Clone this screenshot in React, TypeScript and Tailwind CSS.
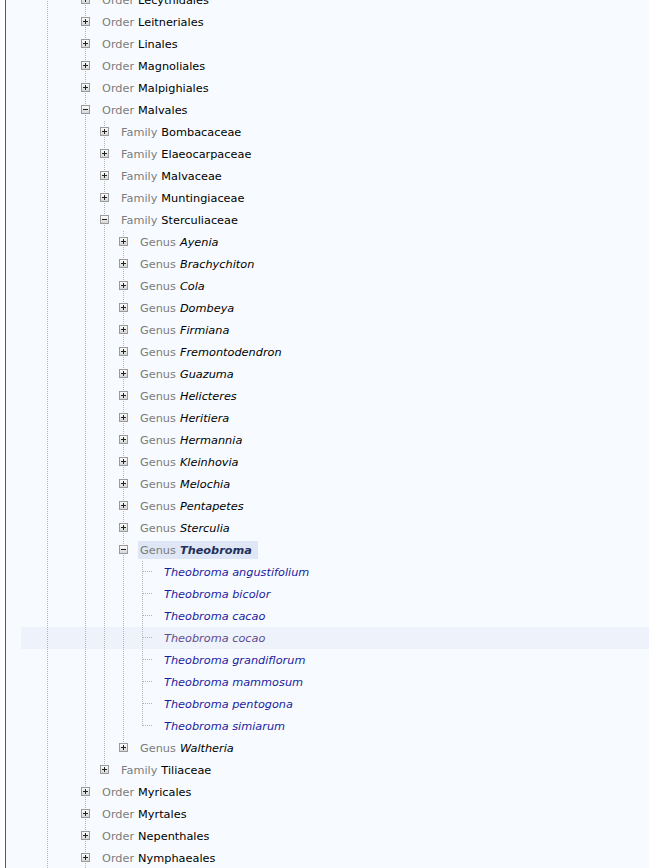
import React from 'react';

type Kind = 'plus' | 'minus' | 'leaf';

type Row = {
  guides: boolean[];
  kind: Kind;
  last?: boolean;
  rank?: string;
  name: string;
  italic?: boolean;
  tone?: 'link' | 'visited' | 'selected';
};

const DOT = '#b4b4b4';

const Guide = ({ on }: { on: boolean }) => (
  <svg width="19" height="22" className="shrink-0 block">
    {on && <line x1="9.5" y1="0" x2="9.5" y2="22" stroke={DOT} strokeDasharray="1 1" />}
  </svg>
);

const NodeCell = ({ kind, last }: { kind: Kind; last?: boolean }) => (
  <svg width="19" height="22" className="shrink-0 block">
    <defs>
      <linearGradient id="boxfill" x1="0" y1="0" x2="0" y2="1">
        <stop offset="0" stopColor="#ffffff" />
        <stop offset="1" stopColor="#d4d4d4" />
      </linearGradient>
    </defs>
    <line x1="9.5" y1="0" x2="9.5" y2={last ? 11 : 22} stroke={DOT} strokeDasharray="1 1" />
    {kind === 'leaf' ? (
      <line x1="10" y1="10.5" x2="19" y2="10.5" stroke={DOT} strokeDasharray="1 1" />
    ) : (
      <>
        <rect x="5.5" y="6.5" width="8" height="8" fill="url(#boxfill)" stroke="#9a9a9a" />
        <line x1="7" y1="10.5" x2="12" y2="10.5" stroke="#222" />
        {kind === 'plus' && <line x1="9.5" y1="8" x2="9.5" y2="13" stroke="#222" />}
      </>
    )}
  </svg>
);

const O = [true, false];
const F = [true, false, true];
const G = [true, false, true, true];
const S = [true, false, true, true, true];

const rows: Row[] = [
  { guides: O, kind: 'plus', rank: 'Order', name: 'Lecythidales' },
  { guides: O, kind: 'plus', rank: 'Order', name: 'Leitneriales' },
  { guides: O, kind: 'plus', rank: 'Order', name: 'Linales' },
  { guides: O, kind: 'plus', rank: 'Order', name: 'Magnoliales' },
  { guides: O, kind: 'plus', rank: 'Order', name: 'Malpighiales' },
  { guides: O, kind: 'minus', rank: 'Order', name: 'Malvales' },
  { guides: F, kind: 'plus', rank: 'Family', name: 'Bombacaceae' },
  { guides: F, kind: 'plus', rank: 'Family', name: 'Elaeocarpaceae' },
  { guides: F, kind: 'plus', rank: 'Family', name: 'Malvaceae' },
  { guides: F, kind: 'plus', rank: 'Family', name: 'Muntingiaceae' },
  { guides: F, kind: 'minus', rank: 'Family', name: 'Sterculiaceae' },
  ...['Ayenia', 'Brachychiton', 'Cola', 'Dombeya', 'Firmiana', 'Fremontodendron', 'Guazuma', 'Helicteres', 'Heritiera', 'Hermannia', 'Kleinhovia', 'Melochia', 'Pentapetes', 'Sterculia'].map(
    (n): Row => ({ guides: G, kind: 'plus', rank: 'Genus', name: n, italic: true })
  ),
  { guides: G, kind: 'minus', rank: 'Genus', name: 'Theobroma', italic: true, tone: 'selected' },
  { guides: S, kind: 'leaf', name: 'Theobroma angustifolium', tone: 'link' },
  { guides: S, kind: 'leaf', name: 'Theobroma bicolor', tone: 'link' },
  { guides: S, kind: 'leaf', name: 'Theobroma cacao', tone: 'link' },
  { guides: S, kind: 'leaf', name: 'Theobroma cocao', tone: 'visited' },
  { guides: S, kind: 'leaf', name: 'Theobroma grandiflorum', tone: 'link' },
  { guides: S, kind: 'leaf', name: 'Theobroma mammosum', tone: 'link' },
  { guides: S, kind: 'leaf', name: 'Theobroma pentogona', tone: 'link' },
  { guides: S, kind: 'leaf', name: 'Theobroma simiarum', tone: 'link', last: true },
  { guides: G, kind: 'plus', rank: 'Genus', name: 'Waltheria', italic: true, last: true },
  { guides: F, kind: 'plus', rank: 'Family', name: 'Tiliaceae', last: true },
  { guides: O, kind: 'plus', rank: 'Order', name: 'Myricales' },
  { guides: O, kind: 'plus', rank: 'Order', name: 'Myrtales' },
  { guides: O, kind: 'plus', rank: 'Order', name: 'Nepenthales' },
  { guides: O, kind: 'plus', rank: 'Order', name: 'Nymphaeales' },
];

const TreeRow = ({ row }: { row: Row }) => {
  const hovered = row.tone === 'visited';
  return (
    <div className={`flex items-center h-[22px] pl-[17px] ${hovered ? 'bg-[#eef2fb]' : ''}`}>
      {row.guides.map((g, i) => (
        <Guide key={i} on={g} />
      ))}
      <NodeCell kind={row.kind} last={row.last} />
      {row.kind === 'leaf' ? (
        <span
          className={`ml-[10px] mt-[2px] px-[2px] italic whitespace-nowrap ${
            hovered ? 'text-[#5e4d8e]' : 'text-[#1c1c9e]'
          }`}
        >
          {row.name}
        </span>
      ) : (
        <span
          className={`ml-[5px] h-[18px] flex items-center pt-[2px] pl-[2px] pr-[6px] whitespace-nowrap ${
            row.tone === 'selected' ? 'bg-[#dfe7f6]' : ''
          }`}
        >
          <span className="text-[#7c7c7c]">{row.rank}</span>
          <span
            className={`ml-[4px] ${row.italic ? 'italic' : ''} ${
              row.tone === 'selected' ? 'font-bold text-[#24305a]' : 'text-black'
            }`}
          >
            {row.name}
          </span>
        </span>
      )}
    </div>
  );
};

export default function App() {
  return (
    <div className="flex h-[868px] w-full overflow-hidden bg-white" style={{ fontFamily: '"DejaVu Sans", Verdana, sans-serif' }}>
      <div className="w-[5px] shrink-0 bg-white" />
      <div className="flex-1 border-l border-[#5c5c5c] bg-[#f7fbff] pl-[15px] text-[11.3px] leading-none">
        <div className="-mt-[11px]">
          {rows.map((r, i) => (
            <TreeRow key={i} row={r} />
          ))}
        </div>
      </div>
    </div>
  );
}
